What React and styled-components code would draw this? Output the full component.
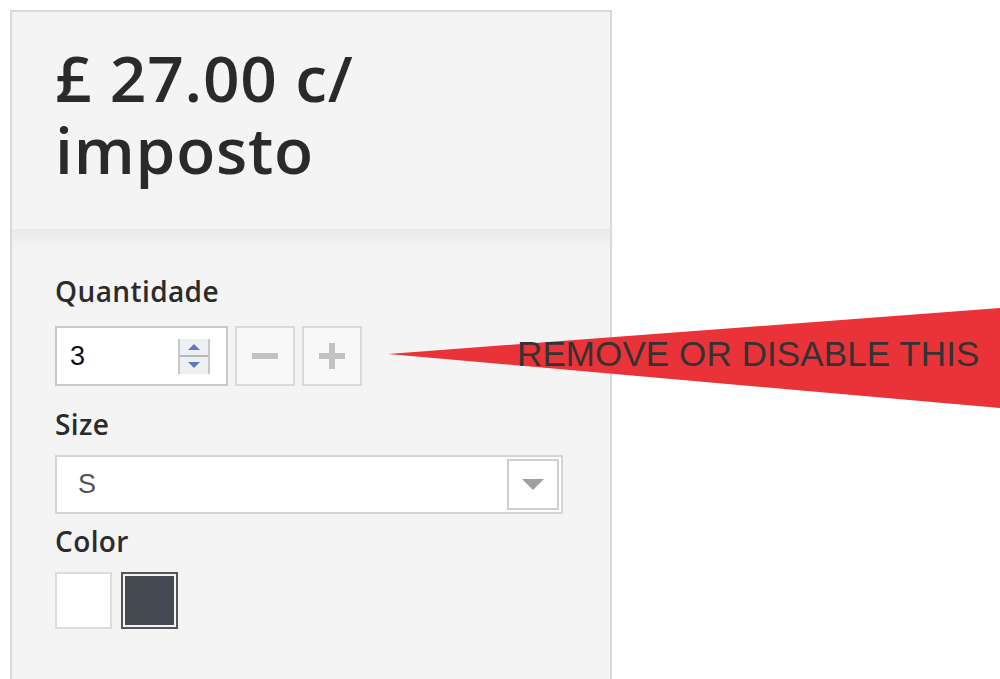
import React from 'react';
import styled, { createGlobalStyle } from 'styled-components';

const GlobalStyle = createGlobalStyle`
  html, body {
    margin: 0;
    padding: 0;
    background: #ffffff;
    overflow: hidden;
  }
  body {
    font-family: "Open Sans", "Liberation Sans", sans-serif;
  }
`;

const Page = styled.div`
  position: relative;
  width: 1000px;
  height: 679px;
  padding: 10px 0 0 10px;
  box-sizing: border-box;
  overflow: hidden;
`;

const Panel = styled.div`
  width: 602px;
  height: 669px;
  box-sizing: border-box;
  border: 2px solid #d9d9d9;
  border-bottom: none;
  background: #f4f4f4;
  display: flex;
  flex-direction: column;
`;

const PriceHeader = styled.div`
  padding: 30px 43px 43px;
`;

const Price = styled.h1`
  margin: 0;
  font-family: "Open Sans", sans-serif;
  font-weight: 600;
  font-size: 64px;
  line-height: 72px;
  color: #2a2a2a;
  letter-spacing: 0.8px;
`;

const Options = styled.div`
  flex: 1;
  padding: 46px 43px 0;
  background: linear-gradient(to bottom, #eaeaea 0px, #f4f4f4 20px);
  display: flex;
  flex-direction: column;
  align-items: flex-start;
`;

const Label = styled.div`
  font-family: "Open Sans", sans-serif;
  font-weight: 600;
  font-size: 28px;
  line-height: 32px;
  letter-spacing: 0.4px;
  color: #2b2b2b;
  margin-top: ${p => p.$gap || 0}px;
`;

const QtyRow = styled.div`
  display: flex;
  gap: 7px;
  margin-top: 19px;
`;

const QtyInput = styled.div`
  width: 173px;
  height: 60px;
  box-sizing: border-box;
  border: 2px solid #c9c9c9;
  background: #fff;
  display: flex;
  align-items: center;
  justify-content: space-between;
  padding: 0 16px 0 13px;
  font-family: "Liberation Sans", Arial, sans-serif;
  font-size: 27px;
  color: #111;
`;

const Spinner = styled.div`
  width: 32px;
  height: 35px;
  box-sizing: border-box;
  border-left: 2px solid #c8c8c8;
  border-right: 2px solid #c8c8c8;
  display: flex;
  flex-direction: column;
`;

const SpinHalf = styled.div`
  flex: 1;
  display: flex;
  align-items: center;
  justify-content: center;
  background: #eef0f4;
  border-top: ${p => (p.$down ? '2px solid #b8b8b8' : 'none')};

  &::after {
    content: '';
    width: 0;
    height: 0;
    border-left: 6px solid transparent;
    border-right: 6px solid transparent;
    ${p => (p.$down ? 'border-top: 6px solid #5b78c8;' : 'border-bottom: 6px solid #5b78c8;')}
  }
`;

const StepButton = styled.div`
  width: 60px;
  height: 60px;
  box-sizing: border-box;
  border: 2px solid #dadada;
  background: #f8f8f8;
  display: flex;
  align-items: center;
  justify-content: center;
  color: #c2c2c2;
`;

const Select = styled.div`
  margin-top: 15px;
  width: 508px;
  height: 59px;
  box-sizing: border-box;
  border: 2px solid #d4d4d4;
  background: #fff;
  display: flex;
  align-items: center;
  justify-content: space-between;
  padding: 0 2px 0 21px;
  font-family: "Liberation Sans", Arial, sans-serif;
  font-size: 27px;
  color: #555;
`;

const SelectArrow = styled.div`
  width: 52px;
  height: 51px;
  box-sizing: border-box;
  border: 2px solid #cfcfcf;
  background: #fff;
  display: flex;
  align-items: center;
  justify-content: center;

  &::after {
    content: '';
    width: 0;
    height: 0;
    border-left: 11px solid transparent;
    border-right: 11px solid transparent;
    border-top: 11px solid #a0a0a0;
  }
`;

const Swatches = styled.div`
  display: flex;
  gap: 9px;
  margin-top: 15px;
`;

const Swatch = styled.div`
  width: 57px;
  height: 57px;
  box-sizing: border-box;
  background: ${p => p.$color};
  border: 2px solid ${p => (p.$selected ? '#555' : '#dcdcdc')};
  box-shadow: ${p => (p.$selected ? 'inset 0 0 0 2px #f4f4f4' : 'none')};
`;

const Callout = styled.div`
  position: absolute;
  left: 386px;
  top: 306px;
  width: 614px;
  height: 104px;
`;

const CalloutShape = styled.svg`
  position: absolute;
  inset: 0;
`;

const CalloutText = styled.span`
  position: absolute;
  left: 131px;
  top: 28px;
  font-family: "Liberation Sans", Arial, sans-serif;
  font-size: 35px;
  line-height: 40px;
  letter-spacing: 0.1px;
  color: #333;
  white-space: nowrap;
`;

const MinusIcon = () => (
  <svg width="26" height="26" viewBox="0 0 26 26">
    <rect x="0" y="10" width="26" height="6" fill="currentColor" />
  </svg>
);

const PlusIcon = () => (
  <svg width="26" height="26" viewBox="0 0 26 26">
    <rect x="0" y="10" width="26" height="6" fill="currentColor" />
    <rect x="10" y="0" width="6" height="26" fill="currentColor" />
  </svg>
);

export default function App() {
  return (
    <>
      <GlobalStyle />
      <Page>
        <Panel>
          <PriceHeader>
            <Price>£ 27.00 c/<br />imposto</Price>
          </PriceHeader>
          <Options>
            <Label>Quantidade</Label>
            <QtyRow>
              <QtyInput>
                <span>3</span>
                <Spinner>
                  <SpinHalf />
                  <SpinHalf $down />
                </Spinner>
              </QtyInput>
              <StepButton><MinusIcon /></StepButton>
              <StepButton><PlusIcon /></StepButton>
            </QtyRow>
            <Label $gap={22}>Size</Label>
            <Select>
              <span>S</span>
              <SelectArrow />
            </Select>
            <Label $gap={11}>Color</Label>
            <Swatches>
              <Swatch $color="#ffffff" />
              <Swatch $color="#434a54" $selected />
            </Swatches>
          </Options>
        </Panel>
        <Callout>
          <CalloutShape width="614" height="104" viewBox="0 0 614 104">
            <polygon points="2,48 614,2 614,102" fill="#ea3338" />
          </CalloutShape>
          <CalloutText>REMOVE OR DISABLE THIS</CalloutText>
        </Callout>
      </Page>
    </>
  );
}
